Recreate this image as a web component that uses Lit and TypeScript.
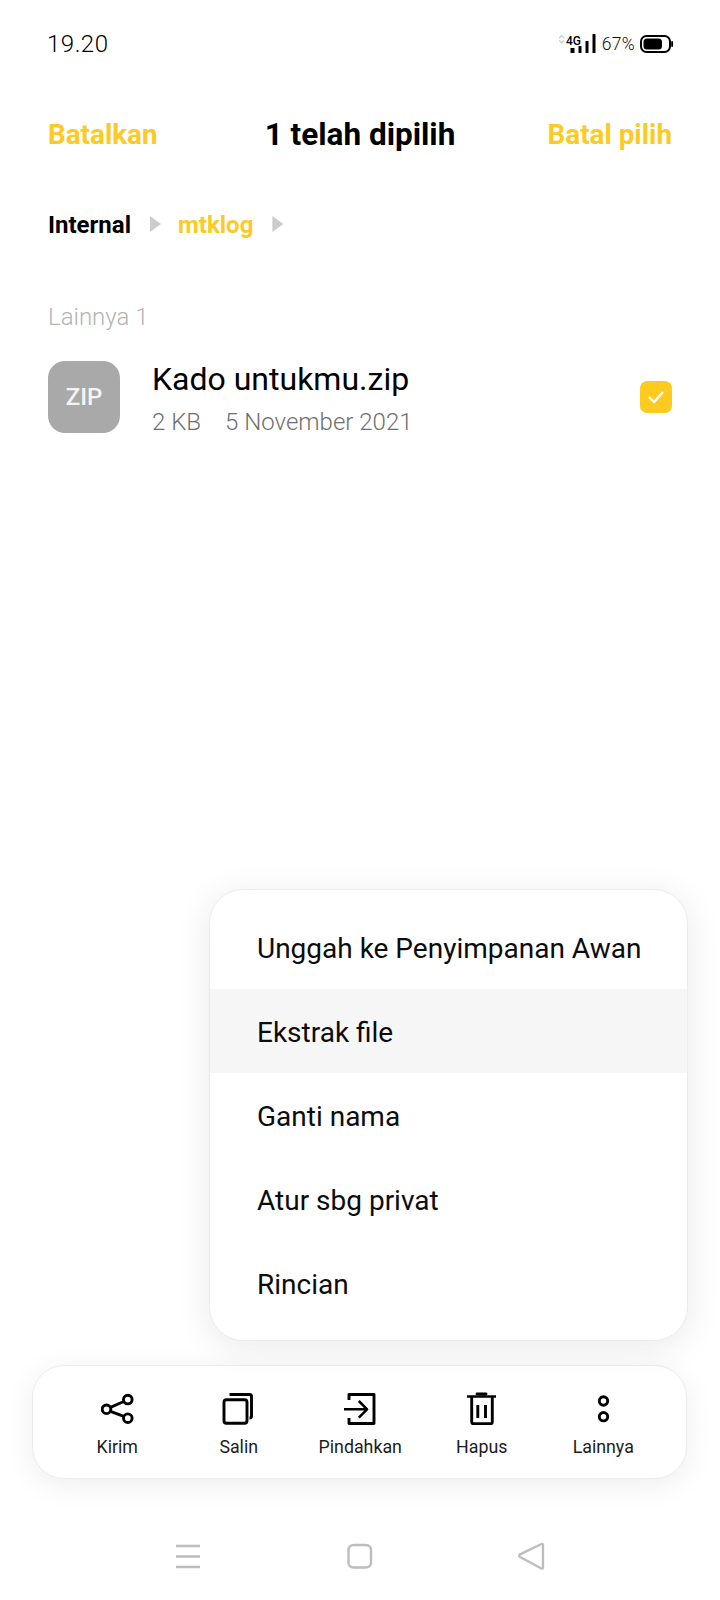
import { LitElement, html, css, svg } from "lit";
import { customElement } from "lit/decorators.js";

const icons = {
  share: svg`<circle cx="5.5" cy="18.3" r="4.3"/><circle cx="26.8" cy="8.6" r="4.3"/><circle cx="26.8" cy="27.2" r="4.3"/><path d="M9.400 16.400 22.900 10.500M9.400 20.300 22.900 25.300"/>`,
  copy: svg`<path d="M7.500 3.500h20a2 2 0 0 1 2 2v19.500a2 2 0 0 1-2 2"/><rect x="2" y="8.800" width="23" height="23.500" rx="2.500"/>`,
  move: svg`<path d="M5 9V3.500h25v29H5V27"/><path d="M0 18.300h23M14.800 10l8.300 8.300-8.300 8.300" class="thin"/>`,
  trash: svg`<path d="M2 5.500h29" class="thin"/><path d="M12 3h9" stroke-linecap="round"/><path d="M6.700 6v24.800a2 2 0 0 0 2 2h16.600a2 2 0 0 0 2-2V6M12.800 14v13M20.500 14v13"/>`,
  more: svg`<circle cx="16.500" cy="10" r="4.200"/><circle cx="16.500" cy="25.700" r="4.200"/>`,
};

@customElement("app-root")
export class AppRoot extends LitElement {
  static styles = css`
    :host { display: block; width: 720px; height: 1600px; background: #fff; font-family: Roboto, "Noto Sans", sans-serif; color: #000; }
    .page { position: relative; height: 1600px; display: flex; flex-direction: column; overflow: hidden; }
    .status { height: 88px; padding: 0 47px; display: flex; align-items: center; justify-content: space-between; box-sizing: border-box; }
    .time { font-size: 24px; font-weight: 300; letter-spacing: 0.5px; }
    .sys { display: flex; align-items: center; gap: 5px; }
    .pct { font-size: 17.500px; font-weight: 300; letter-spacing: 0.3px; color: #111; }
    .header { margin-top: 22px; height: 48px; padding: 0 48px; display: flex; align-items: center; justify-content: space-between; position: relative; }
    .action { font-size: 27.800px; font-weight: 700; color: #fdca24; }
    .title { font-size: 31.500px; font-weight: 700; position: absolute; left: 0; right: 0; text-align: center; }
    .crumbs { margin-top: 47px; height: 40px; padding: 0 48px; display: flex; align-items: center; font-size: 24px; font-weight: 700; }
    .crumb-on { color: #fdca24; }
    .tri { width: 11px; height: 16px; background: #cccccc; clip-path: polygon(0 0, 100% 50%, 0 100%); margin: 0 17px 2px 19px; }
    .section { margin-top: 57px; padding-left: 48px; font-size: 24px; font-weight: 300; color: #b3b3b3; line-height: 30px; }
    .row { margin-top: 29px; padding: 0 48px; display: flex; align-items: flex-start; }
    .zip { width: 72px; height: 72px; border-radius: 17px; background: #a9a9a9; color: #f4f4f4; display: flex; align-items: center; justify-content: center; font-size: 24px; font-weight: 500; }
    .info { flex: 1; margin-left: 32px; padding-top: 1px; }
    .name { font-size: 32px; line-height: 34px; font-weight: 400; }
    .meta { font-size: 24px; font-weight: 300; color: #6f6f6f; line-height: 30px; margin-top: 11px; display: flex; gap: 24px; }
    .check { width: 32px; height: 32px; margin-top: 20px; border-radius: 7px; background: #fdca1f; display: flex; align-items: center; justify-content: center; }
    .spacer { flex: 1; }
    .menu { position: absolute; left: 209px; top: 889px; width: 479px; height: 452px; box-sizing: border-box; padding: 15px 0; background: #fff; border: 1px solid #ececec; border-radius: 34px; box-shadow: 0 6px 36px rgba(0,0,0,.09); overflow: hidden; }
    .item { height: 84px; box-sizing: border-box; padding: 2px 0 0 47px; display: flex; align-items: center; font-size: 28px; color: #0c0c0c; }
    .item.active { background: #f6f6f6; }
    .bar { margin: 0 33px 0 32px; height: 114px; box-sizing: border-box; padding: 0 22px 0 23.500px; display: grid; grid-template-columns: repeat(5, 1fr); background: #fff; border: 1px solid #ececec; border-radius: 32px; box-shadow: 0 6px 30px rgba(0,0,0,.07); }
    .tool { display: flex; flex-direction: column; align-items: center; padding-top: 25px; }
    .tool svg { width: 33px; height: 34px; fill: none; stroke: #000; stroke-width: 2.900; stroke-linejoin: round; }
    .tool .thin { stroke-width: 2.500; }
    .tool span { margin-top: 11px; font-size: 17.800px; line-height: 22px; color: #1c1c1c; white-space: nowrap; }
    .nav { height: 121px; position: relative; }
    .nav svg { position: absolute; left: 0; top: 1px; width: 720px; height: 121px; fill: none; stroke: #bdbdbd; stroke-width: 2.400; stroke-linejoin: round; }
  `;

  render() {
    const tools: [keyof typeof icons, string][] = [["share", "Kirim"], ["copy", "Salin"], ["move", "Pindahkan"], ["trash", "Hapus"], ["more", "Lainnya"]];
    const menu = ["Unggah ke Penyimpanan Awan", "Ekstrak file", "Ganti nama", "Atur sbg privat", "Rincian"];
    return html`<div class="page">
      <div class="status">
        <span class="time">19.20</span>
        <div class="sys">
          <svg width="38" height="24" viewBox="0 0 38 24">
            <path d="M0 6 2.500 3.500 5 6M0 8.500 2.500 11 5 8.500" fill="none" stroke="#c8c8c8" stroke-width="1.200"/>
            <text x="7" y="13" font-family="Roboto" font-size="13.500" font-weight="500" fill="#000" textLength="15" lengthAdjust="spacingAndGlyphs">4G</text>
            <rect x="11.500" y="16" width="4" height="5" fill="#000"/><rect x="19.500" y="14" width="3" height="7" fill="#000"/><rect x="26.500" y="9" width="3" height="12" fill="#000"/><rect x="33.500" y="2" width="3" height="19" fill="#000"/>
          </svg>
          <span class="pct">67%</span>
          <svg width="33" height="18" viewBox="0 0 33 18">
            <rect x="1" y="1" width="29" height="16" rx="5.500" fill="none" stroke="#000" stroke-width="2"/>
            <rect x="3.500" y="3.500" width="18.500" height="11" rx="3.500" fill="#000"/>
            <rect x="31.200" y="6" width="1.800" height="6" rx="0.900" fill="#000"/>
          </svg>
        </div>
      </div>
      <div class="header">
        <span class="action">Batalkan</span>
        <span class="title">1 telah dipilih</span>
        <span class="action">Batal pilih</span>
      </div>
      <div class="crumbs">
        <span>Internal</span><i class="tri"></i><span class="crumb-on">mtklog</span><i class="tri"></i>
      </div>
      <div class="section">Lainnya 1</div>
      <div class="row">
        <div class="zip">ZIP</div>
        <div class="info">
          <div class="name">Kado untukmu.zip</div>
          <div class="meta"><span>2 KB</span><span>5 November 2021</span></div>
        </div>
        <div class="check"><svg width="20" height="16" viewBox="0 0 20 16"><path d="M3 8 8 13 17 3" fill="none" stroke="#fff" stroke-width="2.400"/></svg></div>
      </div>
      <div class="spacer"></div>
      <div class="menu">
        ${menu.map((m, i) => html`<div class="item ${i === 1 ? "active" : ""}">${m}</div>`)}
      </div>
      <div class="bar">
        ${tools.map(([ic, label]) => html`<div class="tool"><svg viewBox="0 0 33 34">${icons[ic]}</svg><span>${label}</span></div>`)}
      </div>
      <div class="nav">
        <svg viewBox="0 0 720 121">
          <path d="M176 66h24M176 76.500h24M176 87h24"/>
          <rect x="348.500" y="65" width="22.500" height="22.500" rx="5"/>
          <path d="M543 65v22.500a1 1 0 0 1-1.500 1L520 77a1.500 1.500 0 0 1 0-2.600L541.500 64a1 1 0 0 1 1.500 1z"/>
        </svg>
      </div>
    </div>`;
  }
}
